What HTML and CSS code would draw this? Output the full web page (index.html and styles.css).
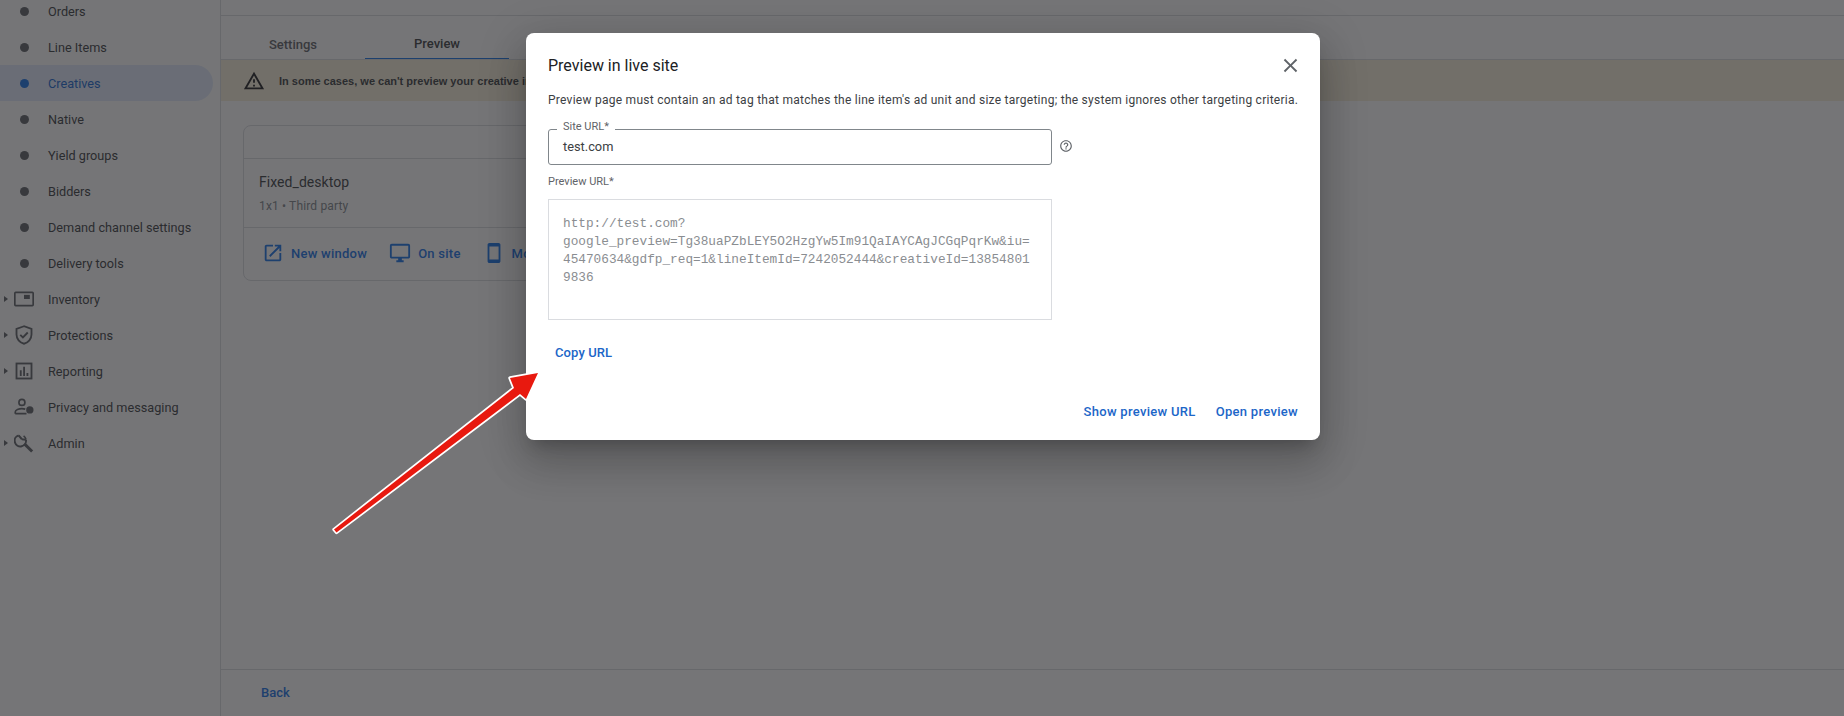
FILE: index.html
```html
<!DOCTYPE html>
<html lang="en">
<head>
<meta charset="utf-8">
<title>Preview in live site</title>
<link rel="stylesheet" href="styles.css">
</head>
<body>
<div class="page">
  <nav class="sidebar">
    <a class="nav-item"><span class="nav-icon"><i class="dot"></i></span>Orders</a>
    <a class="nav-item"><span class="nav-icon"><i class="dot"></i></span>Line Items</a>
    <a class="nav-item active"><span class="nav-icon"><i class="dot"></i></span>Creatives</a>
    <a class="nav-item"><span class="nav-icon"><i class="dot"></i></span>Native</a>
    <a class="nav-item"><span class="nav-icon"><i class="dot"></i></span>Yield groups</a>
    <a class="nav-item"><span class="nav-icon"><i class="dot"></i></span>Bidders</a>
    <a class="nav-item"><span class="nav-icon"><i class="dot"></i></span>Demand channel settings</a>
    <a class="nav-item"><span class="nav-icon"><i class="dot"></i></span>Delivery tools</a>
    <a class="nav-item"><i class="caret"></i><span class="nav-icon">
      <svg class="glyph" viewBox="0 0 24 24"><rect x="1" y="4" width="22" height="16" rx="1" fill="none" stroke="currentColor" stroke-width="2"/><rect x="12" y="7" width="7" height="5" fill="currentColor"/></svg>
    </span>Inventory</a>
    <a class="nav-item"><i class="caret"></i><span class="nav-icon">
      <svg class="glyph" viewBox="0 0 24 24"><path d="M12 1.500L3 4.800v6.700c0 5.200 3.800 9.800 9 11 5.200-1.200 9-5.800 9-11V4.800z" fill="none" stroke="currentColor" stroke-width="2.200"/><path d="M7.500 11.800l3.200 3.200 5.800-6" fill="none" stroke="currentColor" stroke-width="2.200"/></svg>
    </span>Protections</a>
    <a class="nav-item"><i class="caret"></i><span class="nav-icon">
      <svg class="glyph" viewBox="0 0 24 24"><rect x="3" y="3" width="18" height="18" fill="none" stroke="currentColor" stroke-width="2.200"/><path d="M7 11h2.200v7H7zM11 7h2.200v11H11zM15 14.500h2.200V18H15z" fill="currentColor"/></svg>
    </span>Reporting</a>
    <a class="nav-item"><span class="nav-icon">
      <svg class="glyph" viewBox="0 0 24 24"><circle cx="9.500" cy="6.500" r="3.600" fill="none" stroke="currentColor" stroke-width="2"/><path d="M1.500 20v-2c0-2.600 4.500-4 8-4 1.500 0 2.700.2 4 .6M1.500 20H15" fill="none" stroke="currentColor" stroke-width="2"/><circle cx="19" cy="15.500" r="4.400" fill="currentColor"/></svg>
    </span>Privacy and messaging</a>
    <a class="nav-item"><i class="caret"></i><span class="nav-icon">
      <svg class="glyph" viewBox="0 0 24 24"><path d="M5.500 2.800a6.800 6.800 0 1 0 8.800 5.200" fill="none" stroke="currentColor" stroke-width="2.400"/><path d="M5.500 2.800l4 4.700M14.300 8l-4.800-.5" fill="none" stroke="currentColor" stroke-width="2.400"/><path d="M11.500 3.500a6.800 6.800 0 0 1 2.800 4" fill="none" stroke="currentColor" stroke-width="2"/><path d="M13.500 11.500l9.500 9.500-2.500 2.500-9.500-9.500z" fill="currentColor"/></svg>
    </span>Admin</a>
  </nav>

  <main class="main">
    <div class="topbar"></div>
    <div class="tabs">
      <a class="tab">Settings</a>
      <a class="tab current">Preview</a>
    </div>
    <div class="banner">
      <svg class="banner-icon" viewBox="0 0 24 24"><path d="M12 5.990L19.530 19H4.470L12 5.990M12 2L1 21h22L12 2zm1 14h-2v2h2v-2zm0-6h-2v4h2v-4z"/></svg>
      <span class="banner-text">In some cases, we can't preview your creative in</span>
    </div>
    <div class="content">
      <section class="card">
        <div class="card-head"></div>
        <div class="card-body">
          <div class="card-title">Fixed_desktop</div>
          <div class="card-sub">1x1 • Third party</div>
        </div>
        <div class="card-actions">
          <a class="action"><svg viewBox="0 0 24 24"><path d="M19 19H5V5h7V3H5c-1.110 0-2 .9-2 2v14c0 1.100.89 2 2 2h14c1.100 0 2-.9 2-2v-7h-2v7zM14 3v2h3.590l-9.830 9.830 1.410 1.410L19 6.410V10h2V3h-7z"/></svg>New window</a>
          <a class="action"><svg viewBox="0 0 24 24"><path d="M21 2H3c-1.100 0-2 .9-2 2v12c0 1.100.9 2 2 2h7v2H8v2h8v-2h-2v-2h7c1.100 0 2-.9 2-2V4c0-1.100-.9-2-2-2zm0 14H3V4h18v12z"/></svg>On site</a>
          <a class="action"><svg viewBox="0 0 24 24"><path d="M17 1.010L7 1c-1.100 0-2 .9-2 2v18c0 1.100.9 2 2 2h10c1.100 0 2-.9 2-2V3c0-1.100-.9-1.990-2-1.990zM17 19H7V5h10v14z"/></svg>Mobile</a>
        </div>
      </section>
    </div>
    <div class="footer"><a class="back">Back</a></div>
  </main>
</div>

<div class="overlay">
  <div class="dialog">
    <div class="dialog-head">
      <h2 class="dialog-title">Preview in live site</h2>
      <svg class="close" viewBox="0 0 24 24"><path d="M19 6.410L17.590 5 12 10.590 6.410 5 5 6.410 10.590 12 5 17.590 6.410 19 12 13.410 17.590 19 19 17.590 13.410 12z"/></svg>
    </div>
    <p class="dialog-desc">Preview page must contain an ad tag that matches the line item's ad unit and size targeting; the system ignores other targeting criteria.</p>
    <div class="field-row">
      <div class="field">
        <span class="field-label">Site URL*</span>
        <span class="field-value">test.com</span>
      </div>
      <svg class="help" viewBox="0 0 24 24"><path d="M11 18h2v-2h-2v2zm1-16C6.480 2 2 6.480 2 12s4.480 10 10 10 10-4.480 10-10S17.520 2 12 2zm0 18c-4.410 0-8-3.590-8-8s3.590-8 8-8 8 3.590 8 8-3.590 8-8 8zm0-14c-2.210 0-4 1.790-4 4h2c0-1.100.9-2 2-2s2 .9 2 2c0 2-3 1.750-3 5h2c0-2.250 3-2.500 3-5 0-2.210-1.790-4-4-4z"/></svg>
    </div>
    <div class="url-label">Preview URL*</div>
    <div class="url-box">http://test.com?<br>google_preview=Tg38uaPZbLEY5O2HzgYw5Im91QaIAYCAgJCGqPqrKw&amp;iu=<br>45470634&amp;gdfp_req=1&amp;lineItemId=7242052444&amp;creativeId=13854801<br>9836</div>
    <a class="copy">Copy URL</a>
    <div class="dialog-actions">
      <a class="dialog-btn">Show preview URL</a>
      <a class="dialog-btn">Open preview</a>
    </div>
  </div>
</div>

<svg class="arrow" viewBox="0 0 1844 716">
  <path d="M334 529.500 L514 388 L510 378 L538 373 L526 399 L520 394 L336.500 532.500 Z" fill="#e8190f" stroke="#fff" stroke-width="3.400" stroke-linejoin="round" paint-order="stroke"/>
</svg>
</body>
</html>
```
FILE: styles.css
```css
* { box-sizing: border-box; }
html, body { margin: 0; height: 716px; overflow: hidden; }
body { position: relative; background: #fff; font-family: Roboto, "Liberation Sans", sans-serif; color: #3c4043; }
a { display: block; }

.page { display: flex; height: 716px; }

.sidebar { flex: 0 0 221px; margin-top: -7px; padding-right: 7px; border-right: 1px solid #dadce0; }
.nav-item { position: relative; display: flex; align-items: center; height: 36px; font-size: 12.700px; border-radius: 0 18px 18px 0; }
.nav-item.active { background: #e1ebfb; color: #1967d2; }
.nav-icon { flex: 0 0 48px; display: flex; justify-content: center; color: #5f6368; }
.dot { width: 9px; height: 9px; border-radius: 50%; background: #5f6368; }
.active .dot { background: #1a73e8; }
.glyph { width: 20px; height: 20px; fill: currentColor; }
.caret { position: absolute; left: 4px; top: 15px; border-left: 4px solid #5f6368; border-top: 3px solid transparent; border-bottom: 3px solid transparent; }

.main { flex: 1; display: flex; flex-direction: column; min-width: 0; }
.topbar { height: 16px; border-bottom: 1px solid #dadce0; }
.tabs { display: flex; height: 44px; border-bottom: 1px solid #dadce0; }
.tab { width: 144px; padding-top: 20px; text-align: center; font-size: 13px; line-height: 18px; color: #5f6368; font-weight: 500; }
.tab.current { padding-top: 19px; height: 43px; color: #3c4043; border-bottom: 1px solid #1a73e8; }
.banner { display: flex; align-items: center; height: 41px; background: #f8f0da; padding-left: 22px; }
.banner-icon { width: 22px; height: 22px; fill: #202124; flex: none; }
.banner-text { margin-left: 14px; font-size: 11px; font-weight: 700; font-family: "Liberation Sans", sans-serif; color: #3c4043; }
.content { flex: 1; padding: 24px 0 0 22px; }
.card { width: 800px; border: 1px solid #dadce0; border-radius: 8px; }
.card-head { height: 33px; border-bottom: 1px solid #dadce0; }
.card-body { height: 69px; padding: 13px 15px 0; border-bottom: 1px solid #dadce0; }
.card-title { font-size: 14px; line-height: 20px; color: #3c4043; letter-spacing: .05px; }
.card-sub { font-size: 12px; line-height: 18px; margin-top: 5px; color: #80868b; letter-spacing: .15px; }
.card-actions { display: flex; height: 52px; padding: 0 0 2px 18px; gap: 22px; align-items: center; }
.action { display: flex; align-items: center; gap: 7px; font-size: 13px; font-weight: 500; color: #1a73e8; white-space: nowrap; letter-spacing: .25px; }
.action svg { width: 22px; height: 22px; fill: #1a73e8; }
.footer { height: 47px; border-top: 1px solid #dadce0; padding: 14px 0 0 40px; }
.back { font-size: 13px; font-weight: 500; color: #1a73e8; line-height: 18px; }

.overlay { position: absolute; inset: 0; display: flex; justify-content: center; align-items: flex-start; padding: 33px 0 0 2px; background: rgba(32,33,36,.62); }
.dialog { width: 794px; height: 407px; padding: 0 22px; background: #fff; border-radius: 8px; box-shadow: 0 11px 15px -7px rgba(0,0,0,.2), 0 24px 38px 3px rgba(0,0,0,.14), 0 9px 46px 8px rgba(0,0,0,.12); }
.dialog-head { display: flex; justify-content: space-between; align-items: center; height: 64px; }
.dialog-title { margin: 0; font-size: 16px; font-weight: 400; color: #202124; }
.close { width: 23px; height: 23px; fill: #5f6368; margin-right: -4px; }
.dialog-desc { margin: -6px 0 0; font-size: 12px; line-height: 18px; letter-spacing: .26px; color: #3c4043; white-space: nowrap; }
.field-row { display: flex; align-items: center; gap: 7px; margin-top: 20px; }
.field { position: relative; width: 504px; height: 36px; display: flex; align-items: center; padding: 0 0 2px 14px; border: 1px solid #80868b; border-radius: 3px; font-size: 12.800px; color: #3c4043; }
.field-label { position: absolute; left: 8px; top: -10px; padding: 0 6px; background: #fff; font-size: 11px; line-height: 13px; color: #5f6368; }
.help { width: 14px; height: 14px; margin-top: -2px; fill: #5f6368; }
.url-label { margin-top: 10px; font-size: 11px; line-height: 14px; color: #5f6368; }
.url-box { height: 121px; width: 504px; margin-top: 10px; padding: 15px 14px; border: 1px solid #dadce0; font-family: "Liberation Mono", monospace; font-size: 12.750px; line-height: 18px; color: #8a8d91; white-space: nowrap; }
.copy { width: max-content; margin: 24px 0 0 7px; font-size: 13px; font-weight: 500; line-height: 18px; letter-spacing: .1px; color: #1c66c8; }
.dialog-actions { display: flex; justify-content: flex-end; gap: 20px; margin-top: 41px; }
.dialog-btn { font-size: 13px; font-weight: 500; line-height: 18px; letter-spacing: .3px; color: #1c66c8; }

.arrow { position: absolute; left: 0; top: 0; width: 1844px; height: 716px; pointer-events: none; }
```
